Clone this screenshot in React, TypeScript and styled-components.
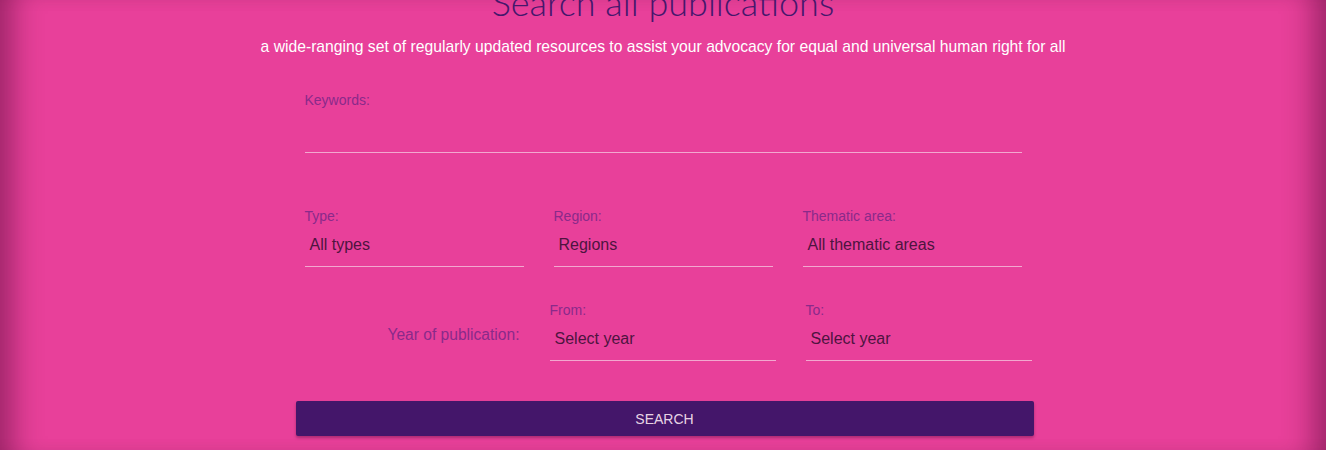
import styled, { createGlobalStyle } from "styled-components";

const GlobalStyle = createGlobalStyle`
  html, body {
    margin: 0;
    padding: 0;
    background: #e8409a;
    overflow: hidden;
  }
  * {
    box-sizing: border-box;
  }
`;

const Page = styled.div`
  min-height: 450px;
  background-color: #e8409a;
  box-shadow: inset 34px 0 30px -22px rgba(60, 0, 40, 0.45),
    inset -34px 0 30px -22px rgba(60, 0, 40, 0.45);
  font-family: "Liberation Sans", Arial, sans-serif;
  display: flex;
  flex-direction: column;
  align-items: center;
  overflow: hidden;
`;

const Title = styled.h1`
  margin: -18px 0 0;
  font-family: Lato, "Open Sans", sans-serif;
  font-weight: 300;
  font-size: 36px;
  line-height: 40px;
  color: #45176c;
  text-align: center;
`;

const Subtitle = styled.p`
  margin: 16px 0 0;
  font-size: 15.7px;
  line-height: 18px;
  color: #ffffff;
  text-align: center;
`;

const Form = styled.form`
  width: 717px;
  margin-top: 36px;
  display: flex;
  flex-direction: column;
`;

const Row = styled.div<{ $top: number }>`
  display: grid;
  grid-template-columns: repeat(3, 219px);
  column-gap: 30px;
  margin-top: ${(p) => p.$top}px;
`;

const YearRow = styled.div`
  display: grid;
  grid-template-columns: 215px 226px 226px;
  column-gap: 30px;
  width: 727px;
  margin-top: 35px;
  align-items: end;
`;

const Field = styled.div`
  display: flex;
  flex-direction: column;
`;

const Label = styled.label`
  font-size: 14px;
  line-height: 16px;
  color: #8a2a8a;
`;

const SideLabel = styled.span`
  font-size: 15.6px;
  line-height: 18px;
  color: #8a2a8a;
  text-align: right;
  padding-bottom: 17px;
`;

const TextInput = styled.div`
  height: 45px;
  border-bottom: 1px solid #f2a8cf;
`;

const Select = styled.div`
  height: 43px;
  padding-left: 5px;
  display: flex;
  align-items: center;
  font-size: 16px;
  color: #4e1440;
  border-bottom: 1px solid #f2a8cf;
`;

const SearchButton = styled.button`
  width: 738px;
  height: 35px;
  margin: 40px 0 0 -9px;
  border: none;
  border-radius: 2px;
  background-color: #44166a;
  color: rgba(255, 235, 245, 0.9);
  font-family: "Liberation Sans", Arial, sans-serif;
  font-size: 14px;
  box-shadow: 0 2px 3px rgba(60, 0, 40, 0.35);
  cursor: pointer;
`;

const App = () => {
  return (
    <>
      <GlobalStyle />
      <Page>
        <Title>Search all publications</Title>
        <Subtitle>
          a wide-ranging set of regularly updated resources to assist your
          advocacy for equal and universal human right for all
        </Subtitle>
        <Form onSubmit={(e) => e.preventDefault()}>
          <Field>
            <Label>Keywords:</Label>
            <TextInput />
          </Field>
          <Row $top={55}>
            <Field>
              <Label>Type:</Label>
              <Select>All types</Select>
            </Field>
            <Field>
              <Label>Region:</Label>
              <Select>Regions</Select>
            </Field>
            <Field>
              <Label>Thematic area:</Label>
              <Select>All thematic areas</Select>
            </Field>
          </Row>
          <YearRow>
            <SideLabel>Year of publication:</SideLabel>
            <Field>
              <Label>From:</Label>
              <Select>Select year</Select>
            </Field>
            <Field>
              <Label>To:</Label>
              <Select>Select year</Select>
            </Field>
          </YearRow>
          <SearchButton type="submit">SEARCH</SearchButton>
        </Form>
      </Page>
    </>
  );
};

export default App;
